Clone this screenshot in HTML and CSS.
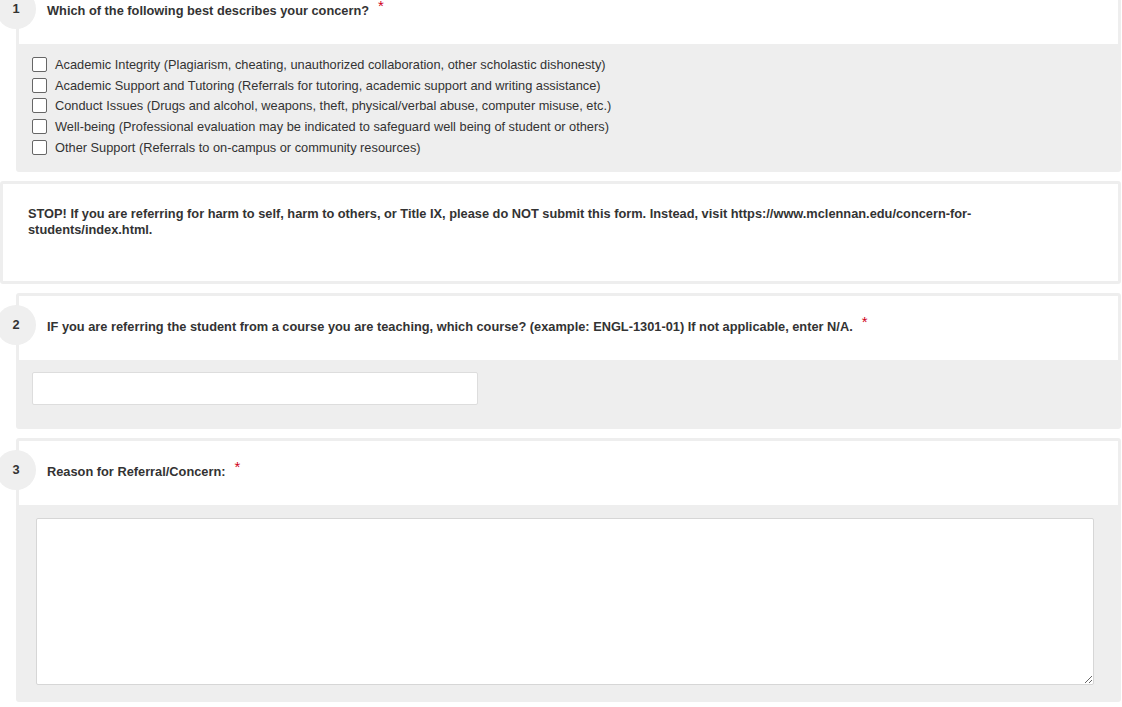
FILE: index.html
```html
<!DOCTYPE html>
<html lang="en">
<head>
  <meta charset="UTF-8" />
  <title>Concern Referral Form</title>
  <link rel="stylesheet" href="styles.css">
</head>
<body>
  <div class="form">

    <div class="question first">
      <div class="q-head">
        <span class="q-num">1</span>
        Which of the following best describes your concern?<span class="req">*</span>
      </div>
      <div class="q-body choices">
        <label class="choice"><span class="box"></span>Academic Integrity (Plagiarism, cheating, unauthorized collaboration, other scholastic dishonesty)</label>
        <label class="choice"><span class="box"></span>Academic Support and Tutoring (Referrals for tutoring, academic support and writing assistance)</label>
        <label class="choice"><span class="box"></span>Conduct Issues (Drugs and alcohol, weapons, theft, physical/verbal abuse, computer misuse, etc.)</label>
        <label class="choice"><span class="box"></span>Well-being (Professional evaluation may be indicated to safeguard well being of student or others)</label>
        <label class="choice"><span class="box"></span>Other Support (Referrals to on-campus or community resources)</label>
      </div>
    </div>

    <div class="notice">
      <p>STOP! If you are referring for harm to self, harm to others, or Title IX, please do NOT submit this form. Instead, visit https://www.mclennan.edu/concern-for-students/index.html.</p>
    </div>

    <div class="question">
      <div class="q-head">
        <span class="q-num">2</span>
        IF you are referring the student from a course you are teaching, which course? (example: ENGL-1301-01) If not applicable, enter N/A.<span class="req">*</span>
      </div>
      <div class="q-body short">
        <input type="text" class="text-input">
      </div>
    </div>

    <div class="question">
      <div class="q-head">
        <span class="q-num">3</span>
        Reason for Referral/Concern:<span class="req">*</span>
      </div>
      <div class="q-body long">
        <textarea class="text-area"></textarea>
      </div>
    </div>

  </div>
</body>
</html>
```

FILE: styles.css
```css
body {
  margin: 0;
  font-family: 'Liberation Sans', Arial, sans-serif;
  font-size: 12.8px;
  color: #333;
  background: #fff;
}
.form {
  padding-right: 1px;
}
.question {
  position: relative;
  margin: 0 0 9px 16px;
  border: 3px solid #eee;
  border-radius: 3px;
  background: #fff;
}
.question.first {
  margin-top: -23px;
}
.q-head {
  height: 16px;
  padding: 23px 28px 25px;
  line-height: 16px;
  font-weight: bold;
}
.q-num {
  position: absolute;
  left: -23px;
  top: 9px;
  width: 40px;
  height: 40px;
  border-radius: 50%;
  background: #efefef;
  line-height: 40px;
  text-align: center;
  font-weight: bold;
}
.req {
  position: relative;
  top: -4px;
  margin-left: 9px;
  line-height: 10px;
  color: #d0021b;
  font-weight: normal;
  font-size: 15px;
}
.q-body {
  background: #eee;
}
.choices {
  padding: 10px 13px 11px;
}
.choice {
  display: flex;
  align-items: center;
  height: 20.75px;
}
.box {
  width: 13px;
  height: 13px;
  margin-right: 8px;
  border: 1px solid #666;
  border-radius: 2px;
  background: #fff;
}
.notice {
  height: 32px;
  margin-bottom: 9px;
  border: 3px solid #eee;
  border-radius: 3px;
  padding: 22px 60px 43px 25px;
}
.notice p {
  margin: 0;
  line-height: 16px;
  font-weight: bold;
}
.short {
  padding: 12px 13px 21px;
}
.text-input {
  display: block;
  box-sizing: border-box;
  width: 446px;
  height: 33px;
  border: 1px solid #ddd;
  border-radius: 2px;
  background: #fff;
}
.long {
  padding: 13px 17px 14px;
}
.text-area {
  display: block;
  box-sizing: border-box;
  width: 1058px;
  height: 167px;
  border: 1px solid #d6d6d6;
  border-radius: 2px;
  background: #fff;
  resize: both;
}
```
